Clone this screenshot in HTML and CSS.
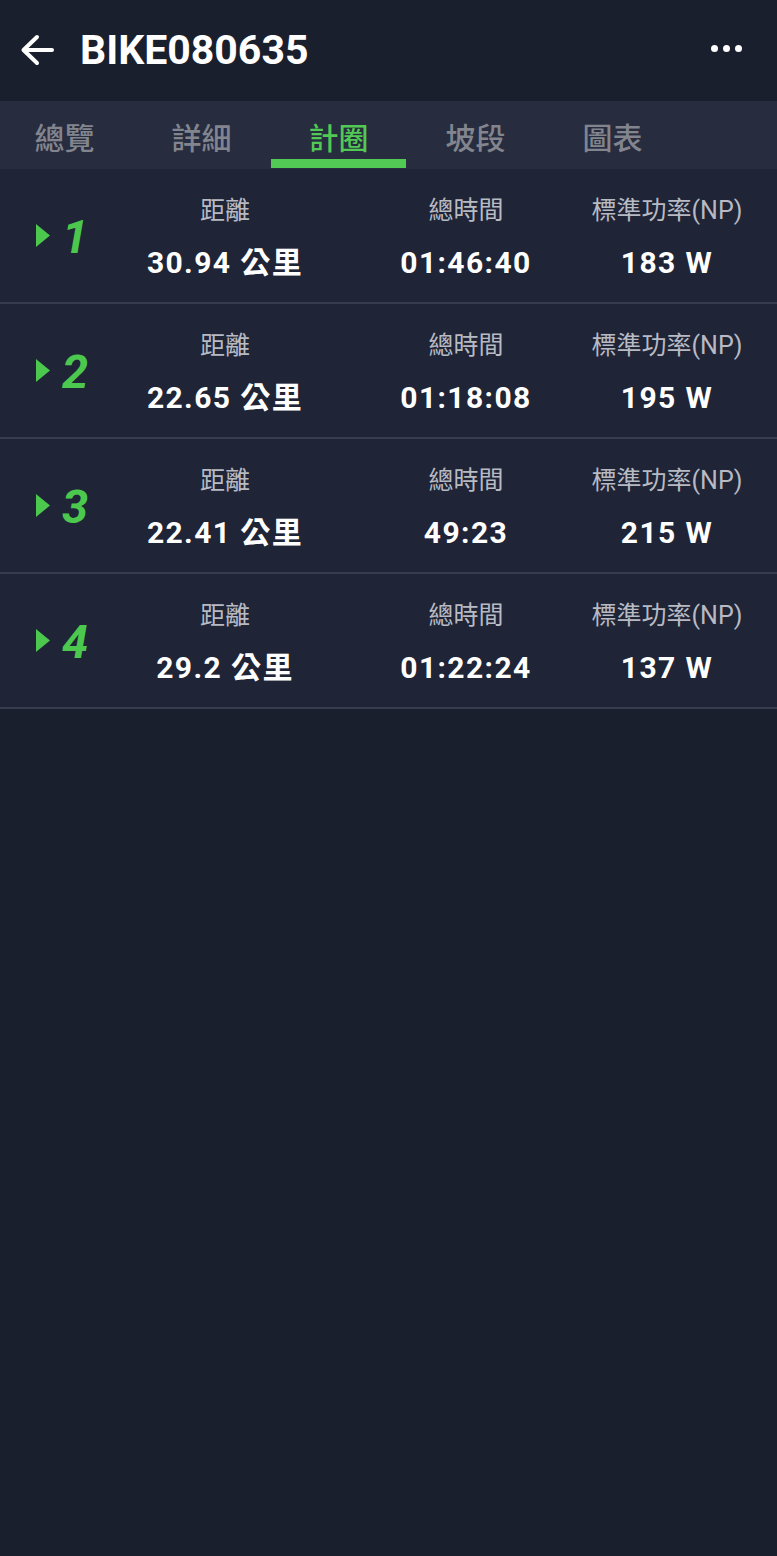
FILE: index.html
```html
<!DOCTYPE html>
<html lang="zh-Hant">
<head>
<meta charset="utf-8">
<title>BIKE080635</title>
<link rel="stylesheet" href="styles.css">
</head>
<body>
<div class="app">
  <header class="topbar">
    <svg class="back" viewBox="0 0 34 32" width="34" height="32" aria-hidden="true">
      <path d="M32 16 H4 M17 3 L3.5 16 L17 29" fill="none" stroke="#ffffff" stroke-width="4" stroke-linecap="round" stroke-linejoin="round"/>
    </svg>
    <h1 class="title">BIKE080635</h1>
    <div class="more"><span></span><span></span><span></span></div>
  </header>
  <nav class="tabs">
    <div class="tab">總覽</div>
    <div class="tab">詳細</div>
    <div class="tab active">計圈</div>
    <div class="tab">坡段</div>
    <div class="tab">圖表</div>
  </nav>
  <main class="laps">
    <div class="lap">
      <div class="lap-head">
        <svg class="tri" viewBox="0 0 14 23" width="14" height="23" aria-hidden="true"><path d="M0 0 L14 11.5 L0 23 Z" fill="#4cc84e"/></svg>
        <span class="num">1</span>
      </div>
      <div class="stat"><span class="label">距離</span><span class="value">30.94 公里</span></div>
      <div class="stat"><span class="label">總時間</span><span class="value">01:46:40</span></div>
      <div class="stat"><span class="label">標準功率(NP)</span><span class="value">183 W</span></div>
    </div>
    <div class="lap">
      <div class="lap-head">
        <svg class="tri" viewBox="0 0 14 23" width="14" height="23" aria-hidden="true"><path d="M0 0 L14 11.5 L0 23 Z" fill="#4cc84e"/></svg>
        <span class="num">2</span>
      </div>
      <div class="stat"><span class="label">距離</span><span class="value">22.65 公里</span></div>
      <div class="stat"><span class="label">總時間</span><span class="value">01:18:08</span></div>
      <div class="stat"><span class="label">標準功率(NP)</span><span class="value">195 W</span></div>
    </div>
    <div class="lap">
      <div class="lap-head">
        <svg class="tri" viewBox="0 0 14 23" width="14" height="23" aria-hidden="true"><path d="M0 0 L14 11.5 L0 23 Z" fill="#4cc84e"/></svg>
        <span class="num">3</span>
      </div>
      <div class="stat"><span class="label">距離</span><span class="value">22.41 公里</span></div>
      <div class="stat"><span class="label">總時間</span><span class="value">49:23</span></div>
      <div class="stat"><span class="label">標準功率(NP)</span><span class="value">215 W</span></div>
    </div>
    <div class="lap">
      <div class="lap-head">
        <svg class="tri" viewBox="0 0 14 23" width="14" height="23" aria-hidden="true"><path d="M0 0 L14 11.5 L0 23 Z" fill="#4cc84e"/></svg>
        <span class="num">4</span>
      </div>
      <div class="stat"><span class="label">距離</span><span class="value">29.2 公里</span></div>
      <div class="stat"><span class="label">總時間</span><span class="value">01:22:24</span></div>
      <div class="stat"><span class="label">標準功率(NP)</span><span class="value">137 W</span></div>
    </div>
  </main>
</div>
</body>
</html>
```
FILE: styles.css
```css
* { box-sizing: border-box; }
html, body {
  margin: 0;
  padding: 0;
  background: #1a1f2e;
}
body {
  font-family: Roboto, "Noto Sans CJK TC", "Noto Sans", sans-serif;
  color: #ffffff;
  min-height: 1556px;
  overflow: hidden;
}
.app {
  width: 777px;
}
.topbar {
  height: 101px;
  background: #1a1f2d;
  display: flex;
  align-items: center;
  padding: 0 35px 0 20px;
}
.back {
  display: block;
  flex: none;
  margin-top: -1px;
}
.title {
  margin: 0 0 0 26px;
  font-size: 41px;
  font-weight: 700;
  line-height: 1;
  color: #ffffff;
  flex: 1;
  margin-top: 0;
}
.more {
  display: flex;
  gap: 5px;
  margin-top: -4px;
}
.more span {
  width: 7px;
  height: 7px;
  border-radius: 50%;
  background: #ffffff;
}
.tabs {
  height: 68px;
  background: #272c3f;
  display: flex;
  margin-left: -4px;
  padding-left: 0;
  overflow: hidden;
}
.tab {
  flex: none;
  width: 137px;
  height: 68px;
  display: flex;
  align-items: center;
  justify-content: center;
  font-family: "Noto Sans CJK TC", sans-serif;
  font-size: 30px;
  font-weight: 500;
  color: #82858e;
  position: relative;
  padding-top: 1px;
}
.tab.active {
  color: #52c954;
}
.tab.active::after {
  content: "";
  position: absolute;
  left: 1px;
  right: 1px;
  bottom: 1px;
  height: 9px;
  background: #52c954;
}
.laps {
  display: flex;
  flex-direction: column;
}
.lap {
  height: 135px;
  background: #1f2436;
  border-bottom: 2px solid #373c4f;
  display: grid;
  grid-template-columns: 130px 190px 292px 110px;
  justify-items: center;
}
.lap-head {
  justify-self: start;
  display: flex;
  align-items: center;
  padding-left: 36px;
  height: 133px;
}
.tri {
  display: block;
  flex: none;
}
.num {
  margin-left: 12px;
  font-size: 47px;
  font-weight: 700;
  font-style: italic;
  color: #4cc84e;
  line-height: 1;
  margin-top: 2px;
}
.stat {
  display: flex;
  flex-direction: column;
  align-items: center;
  padding-top: 27px;
  white-space: nowrap;
}
.label {
  font-family: Roboto, "Noto Sans CJK TC", sans-serif;
  font-size: 25px;
  line-height: 30px;
  color: #b7bac3;
}
.value {
  margin-top: 19px;
  font-size: 30px;
  line-height: 36px;
  font-weight: 700;
  letter-spacing: 1.4px;
  color: #ffffff;
}
```
